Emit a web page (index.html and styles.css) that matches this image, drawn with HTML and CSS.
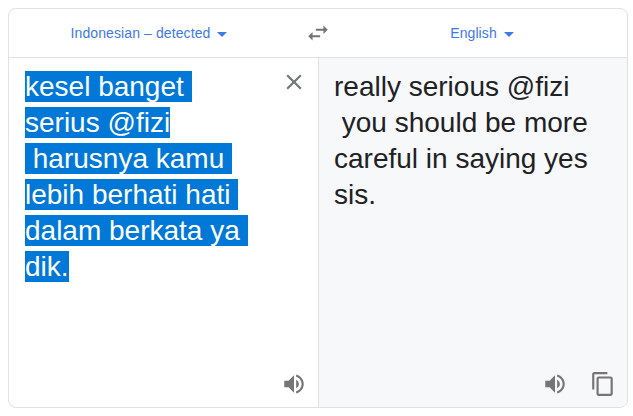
FILE: index.html
```html
<!DOCTYPE html>
<html lang="en">
<head>
<meta charset="utf-8">
<title>Translate</title>
<link rel="stylesheet" href="styles.css">
</head>
<body>
<main class="card">
  <header class="bar">
    <div class="lang from"><span>Indonesian – detected</span><i class="caret"></i></div>
    <svg class="swap" width="26" height="26" viewBox="0 0 24 24"><path d="M6.99 11 3 15l3.99 4v-3H14v-2H6.99v-3zM21 9l-3.99-4v3H10v2h7.01v3L21 9z"/></svg>
    <div class="lang to"><span>English</span><i class="caret"></i></div>
  </header>
  <section class="panes">
    <div class="pane source">
      <div class="text selected"><span>kesel banget </span>
<span>serius @fizi</span>
<span> harusnya kamu </span>
<span>lebih berhati hati </span>
<span>dalam berkata ya </span>
<span>dik.</span></div>
      <svg class="clear" width="26" height="26" viewBox="0 0 24 24"><path d="M19 6.41 17.59 5 12 10.59 6.41 5 5 6.41 10.59 12 5 17.59 6.41 19 12 13.41 17.59 19 19 17.59 13.41 12z"/></svg>
      <div class="tools">
        <svg class="icon" width="26" height="26" viewBox="0 0 24 24"><path d="M3 9v6h4l5 5V4L7 9H3zm13.5 3c0-1.77-1.02-3.29-2.5-4.03v8.05c1.48-.73 2.5-2.25 2.5-4.02zM14 3.23v2.06c2.89.86 5 3.54 5 6.71s-2.11 5.85-5 6.71v2.06c4.01-.91 7-4.49 7-8.77s-2.99-7.86-7-8.77z"/></svg>
      </div>
    </div>
    <div class="pane target">
      <div class="text">really serious @fizi
 you should be more
careful in saying yes
sis.</div>
      <div class="tools">
        <svg class="icon" width="26" height="26" viewBox="0 0 24 24"><path d="M3 9v6h4l5 5V4L7 9H3zm13.5 3c0-1.77-1.02-3.29-2.5-4.03v8.05c1.48-.73 2.5-2.25 2.5-4.02zM14 3.23v2.06c2.89.86 5 3.54 5 6.71s-2.11 5.85-5 6.71v2.06c4.01-.91 7-4.49 7-8.77s-2.99-7.86-7-8.77z"/></svg>
        <svg class="icon" width="26" height="26" viewBox="0 0 24 24"><path d="M16 1H4c-1.1 0-2 .9-2 2v14h2V3h12V1zm3 4H8c-1.1 0-2 .9-2 2v14c0 1.1.9 2 2 2h11c1.1 0 2-.9 2-2V7c0-1.1-.9-2-2-2zm0 16H8V7h11v14z"/></svg>
      </div>
    </div>
  </section>
</main>
</body>
</html>
```
FILE: styles.css
```css
* { box-sizing: border-box; }
html, body { height: 100%; }
body {
  margin: 0;
  padding: 8px 5px 8px 8px;
  background: #fff;
  font-family: "Liberation Sans", Arial, sans-serif;
  overflow: hidden;
}
.card {
  width: 620px;
  height: 400px;
  border: 1px solid #dfe1e5;
  border-radius: 8px;
  display: flex;
  flex-direction: column;
  overflow: hidden;
}
.bar {
  height: 49px;
  flex: none;
  display: grid;
  grid-template-columns: 1fr 26px 1fr;
  align-items: center;
  border-bottom: 1px solid #dfe1e5;
}
.lang {
  display: flex;
  justify-content: center;
  align-items: center;
  gap: 7px;
  color: #4079e8;
  font-size: 14px;
  letter-spacing: .1px;
}
.from { padding-right: 16px; }
.to { padding-left: 6px; }
.caret {
  width: 0;
  height: 0;
  margin-top: 3px;
  border: 5px solid transparent;
  border-top-color: #4079e8;
  border-bottom-width: 0;
}
.swap { fill: #757575; }
.panes { flex: 1; display: flex; min-height: 0; }
.pane { position: relative; height: 100%; }
.source { width: 310px; flex: none; border-right: 1px solid #dfe1e5; }
.target { flex: 1; background: #f7f8fa; }
.text {
  padding: 11px 15px 0 16px;
  font-size: 28px;
  line-height: 36px;
  color: #202124;
  white-space: pre;
}
.target .text { padding-left: 15px; }
.selected { color: #fff; }
.selected span { background: #0078d7; }
.clear { position: absolute; top: 11px; right: 11px; fill: #70757a; }
.tools {
  position: absolute;
  right: 11px;
  bottom: 10px;
  display: flex;
  gap: 22px;
}
.icon { fill: #757575; }
```
